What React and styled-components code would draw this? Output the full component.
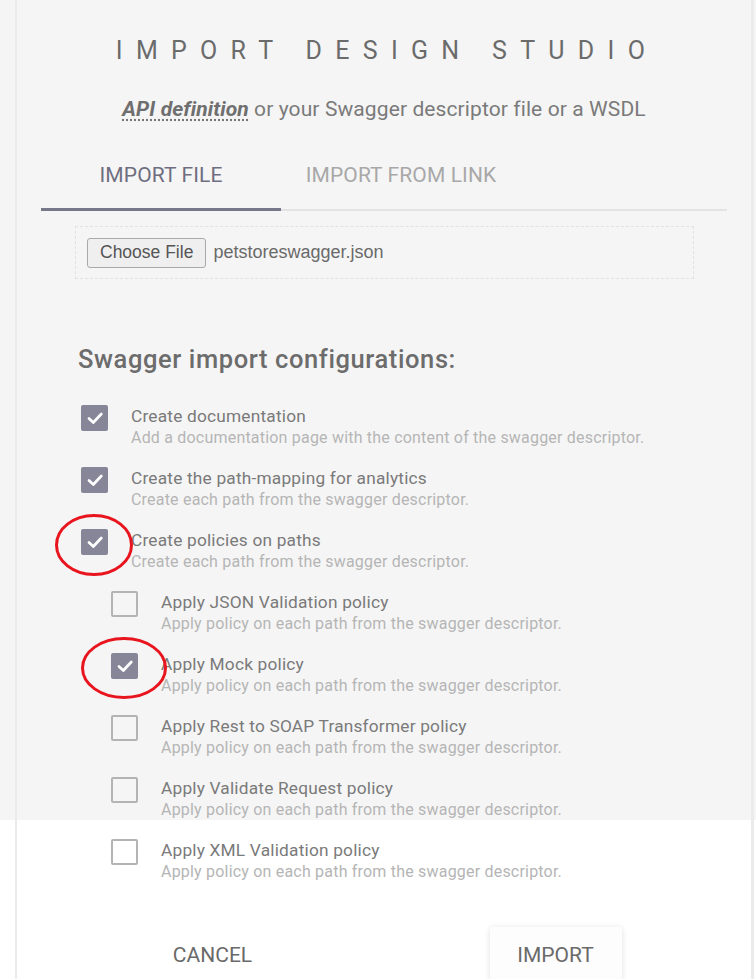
import React from 'react';
import styled, { createGlobalStyle } from 'styled-components';

const GlobalStyle = createGlobalStyle`
  html, body {
    margin: 0;
    padding: 0;
  }
  body {
    font-family: Roboto, "Noto Sans", sans-serif;
    background: linear-gradient(#f5f5f5 0, #f5f5f5 820px, #ffffff 820px);
    min-height: 979px;
    overflow: hidden;
  }
`;

const Dialog = styled.div`
  position: relative;
  margin-left: 15px;
  width: 739px;
  height: 979px;
  border-left: 2px solid #ebebeb;
  border-right: 3px solid #ebebeb;
  padding: 0 24px;
  box-sizing: border-box;
`;

const Title = styled.h1`
  margin: 0;
  padding-top: 37px;
  text-align: center;
  font-family: Roboto, sans-serif;
  font-weight: 400;
  font-size: 25px;
  line-height: 28px;
  letter-spacing: 13.3px;
  color: #6b6b6b;
  text-indent: 6px;
`;

const Lead = styled.p`
  margin: 32px 0 0;
  text-align: center;
  font-size: 21px;
  line-height: 25px;
  color: #7a7a7a;
  letter-spacing: 0.1px;
`;

const Term = styled.span`
  font-weight: 700;
  font-style: italic;
  color: #6f6f6f;
  text-decoration: underline dotted #777;
  text-underline-offset: 3px;
`;

const TabBar = styled.div`
  display: flex;
  margin-top: 28px;
  border-bottom: 2px solid #e3e3e3;
`;

const Tab = styled.div`
  width: 240px;
  text-align: center;
  padding: 14px 0 21px;
  font-size: 21px;
  line-height: 23px;
  letter-spacing: 0.1px;
  color: ${p => (p.$active ? '#6e6e80' : '#a8a8a8')};
  margin-bottom: -2px;
  border-bottom: 3px solid ${p => (p.$active ? '#77778a' : 'transparent')};
`;

const Panel = styled.div`
  padding: 15px 33px 0 34px;
`;

const FileBox = styled.div`
  display: flex;
  align-items: center;
  gap: 7px;
  height: 53px;
  padding: 0 11px;
  border: 1px dashed #e2e2e2;
  box-sizing: border-box;
`;

const ChooseButton = styled.button`
  font-family: "Liberation Sans", Arial, sans-serif;
  font-size: 17.5px;
  color: #555;
  background: #efefef;
  border: 1px solid #a9a9a9;
  border-radius: 3px;
  height: 30px;
  padding: 0 12px;
`;

const FileName = styled.span`
  font-family: "Liberation Sans", Arial, sans-serif;
  font-size: 18px;
  color: #6a6a6a;
`;

const SectionTitle = styled.h2`
  margin: 64px 0 0 37px;
  font-size: 25.5px;
  line-height: 32px;
  font-weight: 500;
  letter-spacing: 0.6px;
  color: #6c6c6c;
`;

const Options = styled.div`
  margin-top: 30px;
  display: flex;
  flex-direction: column;
  gap: 19px;
  padding-left: 40px;
`;

const Option = styled.div`
  display: flex;
  align-items: flex-start;
  gap: 23px;
  padding-left: ${p => (p.$sub ? '30px' : '0')};
`;

const Box = styled.span`
  flex: none;
  width: 27px;
  height: 26px;
  box-sizing: border-box;
  border-radius: 2px;
  background: ${p => (p.$checked ? '#868698' : 'transparent')};
  border: ${p => (p.$checked ? 'none' : '2px solid #b4b4b4')};
  display: flex;
  align-items: center;
  justify-content: center;
`;

const OptionText = styled.div`
  display: flex;
  flex-direction: column;
`;

const Label = styled.span`
  font-size: 17.3px;
  line-height: 22px;
  color: #7a7a7a;
  letter-spacing: 0.2px;
`;

const Desc = styled.span`
  font-size: 16px;
  line-height: 21px;
  color: #b5b5b5;
  letter-spacing: 0.2px;
`;

const Actions = styled.div`
  display: grid;
  grid-template-columns: 1fr 1fr;
  margin-top: 45px;
  justify-items: center;
`;

const ActionButton = styled.button`
  font-family: Roboto, sans-serif;
  font-size: 21px;
  color: #6a6a6a;
  height: 56px;
  width: ${p => (p.$raised ? '132px' : 'auto')};
  padding: 0 16px;
  border: none;
  border-radius: 2px;
  background: ${p => (p.$raised ? '#fdfdfd' : 'transparent')};
  box-shadow: ${p => (p.$raised ? '0 1px 6px rgba(0,0,0,0.12)' : 'none')};
`;

const Mark = styled.svg`
  position: absolute;
  pointer-events: none;
  overflow: visible;
`;

function Check() {
  return (
    <svg width="20" height="20" viewBox="0 0 20 20">
      <path d="M4 10.5 L8.3 14.5 L16.3 6" fill="none" stroke="#fff" strokeWidth="2.7" strokeLinecap="round" strokeLinejoin="round" />
    </svg>
  );
}

const desc = 'Create each path from the swagger descriptor.';
const policyDesc = 'Apply policy on each path from the swagger descriptor.';

const options = [
  { label: 'Create documentation', desc: 'Add a documentation page with the content of the swagger descriptor.', checked: true },
  { label: 'Create the path-mapping for analytics', desc, checked: true },
  { label: 'Create policies on paths', desc, checked: true },
  { label: 'Apply JSON Validation policy', desc: policyDesc, sub: true },
  { label: 'Apply Mock policy', desc: policyDesc, sub: true, checked: true },
  { label: 'Apply Rest to SOAP Transformer policy', desc: policyDesc, sub: true },
  { label: 'Apply Validate Request policy', desc: policyDesc, sub: true },
  { label: 'Apply XML Validation policy', desc: policyDesc, sub: true },
];

export default function App() {
  return (
    <>
      <GlobalStyle />
      <Dialog>
        <Title>IMPORT DESIGN STUDIO</Title>
        <Lead>
          <Term>API definition</Term> or your Swagger descriptor file or a WSDL
        </Lead>
        <TabBar>
          <Tab $active>IMPORT FILE</Tab>
          <Tab>IMPORT FROM LINK</Tab>
        </TabBar>
        <Panel>
          <FileBox>
            <ChooseButton>Choose File</ChooseButton>
            <FileName>petstoreswagger.json</FileName>
          </FileBox>
        </Panel>
        <SectionTitle>Swagger import configurations:</SectionTitle>
        <Options>
          {options.map((o, i) => (
            <Option key={i} $sub={o.sub}>
              <Box $checked={o.checked}>{o.checked && <Check />}</Box>
              <OptionText>
                <Label>{o.label}</Label>
                <Desc>{o.desc}</Desc>
              </OptionText>
            </Option>
          ))}
        </Options>
        <Actions>
          <ActionButton>CANCEL</ActionButton>
          <ActionButton $raised>IMPORT</ActionButton>
        </Actions>
        <Mark style={{ left: 38, top: 514 }} width="78" height="62">
          <ellipse cx="39" cy="31" rx="37.5" ry="29.5" fill="none" stroke="#e8141e" strokeWidth="3" />
        </Mark>
        <Mark style={{ left: 64, top: 637 }} width="86" height="62">
          <ellipse cx="43" cy="31" rx="41.5" ry="29.5" fill="none" stroke="#e8141e" strokeWidth="3" />
        </Mark>
      </Dialog>
    </>
  );
}
